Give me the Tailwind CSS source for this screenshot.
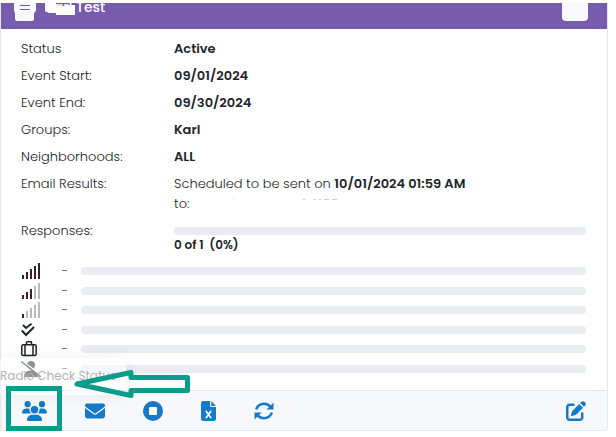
<!DOCTYPE html>
<html lang="en">
  <head>
    <meta charset="UTF-8" />
    <meta name="viewport" content="width=device-width, initial-scale=1.0" />
    <title>Karl Test</title>
    <script src="https://cdn.jsdelivr.net/npm/@tailwindcss/browser@4"></script>
  </head>
  <body class="bg-white font-['Poppins','Inter',sans-serif] text-[13px] leading-5 text-[#212529]">
    <main class="relative mt-[3px] mr-2 border border-t-0 border-[#e6e6ee] rounded-b">
      <!-- Card header, scrolled partly out of view -->
      <header class="flex items-start h-[26px] pl-[13px] pr-[19px] bg-[#775bad] overflow-hidden">
        <button type="button" aria-label="Menu" class="shrink-0">
          <svg class="block w-[22px] h-[18px]" viewBox="0 0 22 18">
            <path d="M0 0H22V7Q22 9 20 10V16Q20 18 18 18H3Q1 18 1 16V10Q0 9 0 7Z" fill="#f8f9fa" />
            <path d="M6 2.5H16M6 6.5H16" stroke="#775bad" stroke-width="1.2" />
          </svg>
        </button>
        <div class="relative ml-[9px] -mt-1.5">
          <h1 class="text-[14px] leading-5 font-medium text-white">Karl Test</h1>
          <svg class="absolute left-0 top-1.5 w-[30px] h-3" viewBox="0 0 30 12">
            <path d="M0 0H11V3H20V2H30V12H11V10H4L0 8Z" fill="#fff" />
          </svg>
        </div>
        <button type="button" aria-label="Options" class="ml-auto w-[26px] h-[18px] rounded-b bg-[#f8f9fa]"></button>
      </header>

      <section class="pl-5 pr-[21px] pt-2.5 pb-3">
        <dl class="grid grid-cols-[153px_1fr] gap-y-[7px]">
          <dt class="font-light">Status</dt>
          <dd class="font-semibold">Active</dd>
          <dt class="font-light">Event Start:</dt>
          <dd class="font-semibold">09/01/2024</dd>
          <dt class="font-light">Event End:</dt>
          <dd class="font-semibold">09/30/2024</dd>
          <dt class="font-light">Groups:</dt>
          <dd class="font-semibold">Karl</dd>
          <dt class="font-light">Neighborhoods:</dt>
          <dd class="font-semibold">ALL</dd>
          <dt class="font-light">Email Results:</dt>
          <dd class="font-light">
            Scheduled to be sent on <b class="font-semibold">10/01/2024 01:59 AM</b><br />
            <span class="flex">
              to:
              <svg class="ml-10 w-28 h-3" viewBox="0 0 112 12" stroke="#ccc">
                <path d="M4 4.5H5M74 5.5H76M85 5.5H87M90 5.5H92M95 5.5H100M103 5.5H108" />
              </svg>
            </span>
          </dd>
          <dt class="font-light">Responses:</dt>
          <dd class="pt-1.5">
            <div class="h-2 rounded bg-[#ebecf2]"></div>
            <p class="pt-0.5 text-[12px] leading-4 font-semibold">0 of 1 &nbsp;(0%)</p>
          </dd>
        </dl>

        <!-- Response breakdown -->
        <ul class="grid grid-rows-6 h-[117px] mt-2 text-[#6c757d]">
          <li class="grid grid-cols-[40px_20px_1fr] items-center">
            <svg class="w-5 h-4" viewBox="0 0 20 16" fill="#3a2129">
              <path d="M1 12h2v4H1zM5 9h2v7H5zM9 6h2v10H9zM13 3h2v13h-2zM17 0h2v16h-2z" />
            </svg>
            <span>-</span>
            <div class="h-2 rounded bg-[#ebecf2]"></div>
          </li>
          <li class="grid grid-cols-[40px_20px_1fr] items-center">
            <svg class="w-5 h-4" viewBox="0 0 20 16" fill="#3a2129">
              <path d="M1 12h2v4H1zM5 9h2v7H5zM9 6h2v10H9z" />
              <path d="M13 3h2v13h-2zM17 0h2v16h-2z" fill="#bbb" />
            </svg>
            <span>-</span>
            <div class="h-2 rounded bg-[#ebecf2]"></div>
          </li>
          <li class="grid grid-cols-[40px_20px_1fr] items-center">
            <svg class="w-5 h-4" viewBox="0 0 20 16" fill="#3a2129">
              <path d="M1 12h2v4H1z" />
              <path d="M5 9h2v7H5zM9 6h2v10H9zM13 3h2v13h-2zM17 0h2v16h-2z" fill="#bbb" />
            </svg>
            <span>-</span>
            <div class="h-2 rounded bg-[#ebecf2]"></div>
          </li>
          <li class="grid grid-cols-[40px_20px_1fr] items-center">
            <svg class="w-[14px] h-[14px]" viewBox="0 0 14 14" fill="none" stroke="#212529" stroke-width="2">
              <path d="M2 2L5 5L10.5 .8M.8 7.5L5 12L13 4" />
            </svg>
            <span>-</span>
            <div class="h-2 rounded bg-[#ebecf2]"></div>
          </li>
          <li class="grid grid-cols-[40px_20px_1fr] items-center">
            <svg class="w-4 h-4" viewBox="0 0 16 16" fill="none" stroke="#212529" stroke-width="1.5">
              <rect x=".8" y="3.8" width="14.4" height="10.8" rx="1.5" />
              <path d="M4 4V14.500M12 4V14.500M5.500 4V1.500Q5.500 .8 6.200 .8H9.800Q10.500 .8 10.500 1.500V4" />
            </svg>
            <span>-</span>
            <div class="h-2 rounded bg-[#ebecf2]"></div>
          </li>
          <li class="grid grid-cols-[40px_20px_1fr] items-center">
            <svg class="w-5 h-4" viewBox="0 0 20 16" fill="#212529">
              <circle cx="10" cy="4" r="4" />
              <path d="M3 16Q3 9.500 9 9.500H11Q17 9.500 17 16Z" />
              <path d="M1.500 0L20 14.500" stroke="#fff" stroke-width="1.500" />
              <path d="M.8 1L19.200 15.300" stroke="#212529" stroke-width="1.500" stroke-linecap="round" />
            </svg>
            <span>-</span>
            <div class="h-2 rounded bg-[#ebecf2]"></div>
          </li>
        </ul>
      </section>

      <footer class="flex items-center gap-[38px] h-10 pl-[21px] pr-[21px] border-t border-[#e6e6ee] rounded-b bg-[#f7f8fb] text-[#1479c9]">
        <button type="button" aria-label="Radio Check Status">
          <svg class="block w-[25px] h-5" viewBox="0 0 640 512" fill="currentColor">
            <path d="M144 0a80 80 0 1 1 0 160A80 80 0 1 1 144 0zM512 0a80 80 0 1 1 0 160A80 80 0 1 1 512 0zM0 298.700C0 239.800 47.800 192 106.700 192h42.700c15.900 0 31 3.500 44.600 9.700c-1.300 7.200-1.900 14.700-1.900 22.300c0 38.200 16.800 72.500 43.300 96H21.300C9.600 320 0 310.400 0 298.700zM405.300 320c26.600-23.500 43.300-57.800 43.300-96c0-7.600-.7-15-1.900-22.300c13.600-6.300 28.700-9.700 44.600-9.700h42.700C592.200 192 640 239.800 640 298.700c0 11.800-9.600 21.300-21.300 21.300H405.300zM224 224a96 96 0 1 1 192 0 96 96 0 1 1-192 0zM128 485.300C128 411.700 187.700 352 261.300 352H378.700C452.300 352 512 411.700 512 485.300c0 14.700-11.900 26.700-26.700 26.700H154.700c-14.700 0-26.700-11.900-26.700-26.700z" />
          </svg>
        </button>
        <button type="button" aria-label="Email">
          <svg class="block w-5 h-5" viewBox="0 0 512 512" fill="currentColor">
            <path d="M48 64C21.500 64 0 85.500 0 112c0 15.100 7.100 29.300 19.200 38.400L236.800 313.600c11.400 8.500 27 8.500 38.400 0L492.800 150.400c12.100-9.100 19.200-23.300 19.200-38.400c0-26.500-21.500-48-48-48H48zM0 176V384c0 35.300 28.700 64 64 64H448c35.300 0 64-28.700 64-64V176L294.400 339.200c-22.800 17.100-54 17.100-76.800 0L0 176z" />
          </svg>
        </button>
        <button type="button" aria-label="Stop">
          <svg class="block w-5 h-5" viewBox="0 0 20 20">
            <circle cx="10" cy="10" r="10" fill="currentColor" />
            <rect x="6" y="6" width="8" height="8" rx="1" fill="#fff" />
          </svg>
        </button>
        <button type="button" aria-label="Export to Excel">
          <svg class="block w-[15px] h-5" viewBox="0 0 15 20">
            <path d="M2.500 0H9V5Q9 6 10 6H15V17.500Q15 20 12.500 20H2.500Q0 20 0 17.500V2.500Q0 0 2.500 0ZM10.200 0L15 5H10.200Z" fill="currentColor" />
            <path d="M5.300 10.500L9.700 16.500M9.700 10.500L5.300 16.500" stroke="#fff" stroke-width="1.800" stroke-linecap="round" />
          </svg>
        </button>
        <button type="button" aria-label="Refresh">
          <svg class="block w-5 h-5" viewBox="0 0 20 20" fill="none" stroke="currentColor" stroke-width="2.500">
            <path d="M2.200 8.500A8 7.500 0 0 1 16.500 6M17.800 11.500A8 7.500 0 0 1 3.500 14" />
            <path d="M19.500 1.500V8.500H12.500ZM.5 18.500V11.500H7.500Z" fill="currentColor" stroke="none" />
          </svg>
        </button>
        <button type="button" aria-label="Edit" class="ml-auto">
          <svg class="block w-5 h-5" viewBox="0 0 512 512" fill="currentColor">
            <path d="M471.600 21.700c-21.900-21.900-57.300-21.900-79.200 0L362.300 51.700l97.900 97.900 30.100-30.100c21.900-21.900 21.900-57.300 0-79.200L471.600 21.700zm-299.200 220c-6.100 6.100-10.800 13.600-13.500 21.900l-29.600 88.800c-2.900 8.600-.6 18.100 5.800 24.600s15.900 8.700 24.600 5.800l88.800-29.600c8.200-2.700 15.700-7.400 21.900-13.500L437.700 172.300 339.700 74.300 172.400 241.700zM96 64C43 64 0 107 0 160V416c0 53 43 96 96 96H352c53 0 96-43 96-96V320c0-17.700-14.300-32-32-32s-32 14.300-32 32v96c0 17.700-14.300 32-32 32H96c-17.700 0-32-14.300-32-32V160c0-17.700 14.300-32 32-32h96c17.700 0 32-14.300 32-32s-14.300-32-32-32H96z" />
          </svg>
        </button>
      </footer>

      <!-- Tooltip fading in over the first footer button -->
      <div role="tooltip" class="absolute -left-px bottom-[35px] w-[126px] h-[37px] pt-2 rounded-r bg-white/50 shadow-[0_0_20px_rgba(0,0,0,0.06)] text-[12px] text-[#b3b3b3] whitespace-nowrap">
        Radio Check Status
      </div>

      <!-- Highlight box and arrow -->
      <div class="absolute left-[5px] -bottom-px w-14 h-[45px] border-5 border-[#0b9c8c]"></div>
      <svg class="absolute left-[72px] bottom-[30px] w-[118px] h-8" viewBox="0 0 118 32" fill="none" stroke="#0b9c8c" stroke-width="5" stroke-linejoin="round">
        <path d="M4 16L58 4.500V9.500H114.500V22.500H58V27.500Z" />
      </svg>
    </main>
  </body>
</html>
